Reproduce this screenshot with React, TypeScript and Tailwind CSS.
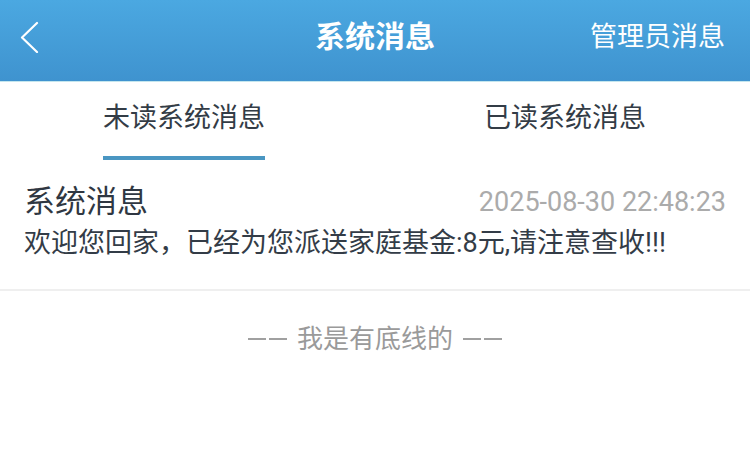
import React from "react";

export default function App() {
  const cjk = { fontFamily: "Roboto, 'Noto Sans CJK SC', sans-serif" };
  return (
    <div className="w-[750px] h-[467px] bg-white overflow-hidden" style={cjk}>
      <div className="h-[82px] bg-gradient-to-b from-[#4ba8e1] to-[#3f93cf] border-b border-[#c4e6ee] grid grid-cols-[1fr_auto_1fr] items-center pb-[7px]">
        <div className="pl-[19px] flex items-center">
          <svg width="22" height="32" viewBox="0 0 22 32" fill="none">
            <path d="M18 2 L3 16.5 L18 31" stroke="white" strokeWidth="2.2" strokeLinecap="round" strokeLinejoin="round" />
          </svg>
        </div>
        <div className="text-white text-[30px] font-bold leading-none">系统消息</div>
        <div className="text-white text-[27px] leading-none text-right pr-[25px]">管理员消息</div>
      </div>
      <div className="grid grid-cols-2 h-[78px]">
        <div className="flex justify-center">
          <div className="flex flex-col items-center mr-[7px]">
            <div className="text-[27px] leading-none text-[#333c46] pt-[23px]">未读系统消息</div>
            <div className="mt-[24px] h-[4px] w-[162px] bg-[#4a96c2]" />
          </div>
        </div>
        <div className="flex justify-center">
          <div className="text-[27px] leading-none text-[#333c46] pt-[23px] ml-[5px]">已读系统消息</div>
        </div>
      </div>
      <div className="px-[24px] pt-[20px] border-b-2 border-[#efefef] h-[131px]">
        <div className="flex justify-between items-center">
          <div className="text-[31px] leading-[44px] text-[#2f3742]">系统消息</div>
          <div className="text-[27px] leading-none text-[#ababab]">2025-08-30 22:48:23</div>
        </div>
        <div className="text-[27px] leading-[38px] text-[#333c47]">欢迎您回家，已经为您派送家庭基金:8元,请注意查收!!!</div>
      </div>
      <div className="flex justify-center items-center gap-[10px] pt-[35px] text-[26px] leading-none text-[#9a9a9a]">
        <span className="flex gap-[3px]">
          <span className="block w-[18px] h-[2px] bg-[#a0a0a0]" />
          <span className="block w-[18px] h-[2px] bg-[#a0a0a0]" />
        </span>
        <span>我是有底线的</span>
        <span className="flex gap-[3px]">
          <span className="block w-[18px] h-[2px] bg-[#a0a0a0]" />
          <span className="block w-[18px] h-[2px] bg-[#a0a0a0]" />
        </span>
      </div>
    </div>
  );
}
